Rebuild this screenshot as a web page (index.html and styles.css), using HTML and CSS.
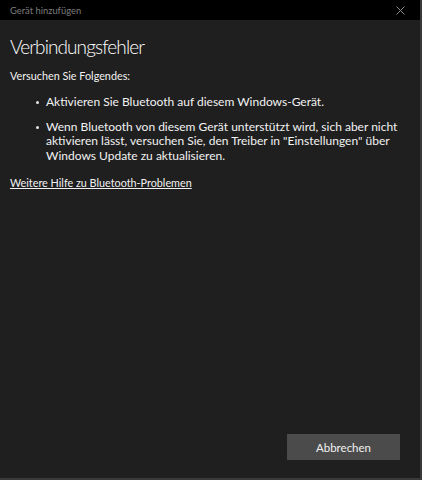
FILE: index.html
```html
<!DOCTYPE html>
<html lang="de">
<head>
<meta charset="utf-8">
<title>Gerät hinzufügen</title>
<link rel="stylesheet" href="styles.css">
</head>
<body>
<div class="window">
  <div class="titlebar">
    <span class="title">Gerät hinzufügen</span>
    <span class="close" aria-label="Schließen">
      <svg width="9" height="9" viewBox="0 0 9 9"><path d="M0.5 0.5L8.5 8.5M8.5 0.5L0.5 8.5" stroke="#8a8a8a" stroke-width="1" fill="none"/></svg>
    </span>
  </div>
  <div class="content">
    <h1 class="heading">Verbindungsfehler</h1>
    <p class="lead">Versuchen Sie Folgendes:</p>
    <ul class="tips">
      <li>Aktivieren Sie Bluetooth auf diesem Windows-Gerät.</li>
      <li>Wenn Bluetooth von diesem Gerät unterstützt wird, sich aber nicht aktivieren lässt, versuchen Sie, den Treiber in "Einstellungen" über Windows Update zu aktualisieren.</li>
    </ul>
    <a class="help" href="#">Weitere Hilfe zu Bluetooth-Problemen</a>
    <div class="spacer"></div>
    <div class="actions">
      <button class="btn">Abbrechen</button>
    </div>
  </div>
</div>
</body>
</html>
```
FILE: styles.css
```css
html, body {
  margin: 0;
  padding: 0;
  background: #1f1f1f;
}
body {
  width: 422px;
  height: 480px;
  font-family: Lato, "Noto Sans", sans-serif;
  color: #f2f2f2;
}
.window {
  box-sizing: border-box;
  width: 422px;
  height: 480px;
  display: flex;
  flex-direction: column;
  background: #1f1f1f;
  border-right: 2px solid #3a3a3a;
  border-bottom: 2px solid #3a3a3a;
}
.titlebar {
  height: 20px;
  background: #000;
  display: flex;
  align-items: center;
  justify-content: space-between;
  padding: 0 15px 0 10px;
}
.title {
  font-size: 9.4px;
  color: #7c7c7c;
}
.close {
  display: flex;
}
.content {
  flex: 1;
  display: flex;
  flex-direction: column;
  padding: 13px 20px 18px 10px;
}
.heading {
  margin: 0;
  font-size: 19px;
  font-weight: 300;
  letter-spacing: -0.9px;
  line-height: 28px;
  color: #fff;
}
.lead {
  margin: 7px 0 0;
  font-size: 10.8px;
  line-height: 16px;
  font-weight: 400;
}
.tips {
  list-style: none;
  margin: 11px 0 0;
  padding: 0 0 0 36px;
  font-size: 12px;
  line-height: 14.5px;
}
.tips li {
  position: relative;
  margin-bottom: 10px;
}
.tips li::before {
  content: "";
  position: absolute;
  left: -10px;
  top: 6px;
  width: 3px;
  height: 3px;
  border-radius: 50%;
  background: #e6e6e6;
}
.help {
  margin-top: 2px;
  font-size: 10.8px;
  line-height: 16px;
  color: #f2f2f2;
  text-decoration: underline;
  align-self: flex-start;
}
.spacer {
  flex: 1;
}
.actions {
  display: flex;
  justify-content: flex-end;
}
.btn {
  width: 113px;
  height: 26px;
  background: #4b4b4b;
  border: none;
  color: #f0f0f0;
  font-family: inherit;
  font-size: 11.5px;
}
```
